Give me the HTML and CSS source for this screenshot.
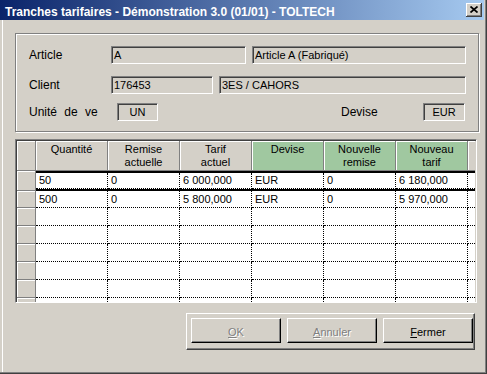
FILE: index.html
```html
<!DOCTYPE html>
<html lang="fr">
<head>
<meta charset="utf-8">
<title>Tranches tarifaires</title>
<link rel="stylesheet" href="styles.css">
</head>
<body>
<div class="win">
  <div class="titlebar">
    <span class="title">Tranches tarifaires - Démonstration 3.0 (01/01) - TOLTECH</span>
    <span class="close"><svg width="8" height="7" viewBox="0 0 8 7"><path d="M0.5 0.5 L7.5 6.5 M7.5 0.5 L0.5 6.5" stroke="#000" stroke-width="1.7" fill="none"/></svg></span>
  </div>
  <div class="body">
    <div class="group">
      <div class="frow r1">
        <span class="lbl">Article</span>
        <span class="fld w-art">A</span>
        <span class="fld w-art2">Article A (Fabriqué)</span>
      </div>
      <div class="frow r2">
        <span class="lbl">Client</span>
        <span class="fld w-cli">176453</span>
        <span class="fld w-cli2">3ES / CAHORS</span>
      </div>
      <div class="frow r3">
        <span class="lbl lbl-unit">Unité de ve</span>
        <span class="fld fc w-un">UN</span>
        <span class="lbl lbl-dev">Devise</span>
        <span class="fld fc w-eur">EUR</span>
      </div>
    </div>

    <div class="grid">
      <div class="grow hrow">
        <div class="rh"></div>
        <div class="cells">
          <div class="hc">Quantité</div>
          <div class="hc">Remise<br>actuelle</div>
          <div class="hc">Tarif<br>actuel</div>
          <div class="hc green">Devise</div>
          <div class="hc green">Nouvelle<br>remise</div>
          <div class="hc green">Nouveau<br>tarif</div>
          <div class="hc fill"></div>
        </div>
      </div>
      <div class="grow cur">
        <div class="rh"></div>
        <div class="cells">
          <div class="c">50</div><div class="c">0</div><div class="c">6 000,000</div><div class="c">EUR</div><div class="c">0</div><div class="c">6 180,000</div><div class="c fill"></div>
        </div>
      </div>
      <div class="grow r-2">
        <div class="rh"></div>
        <div class="cells">
          <div class="c">500</div><div class="c">0</div><div class="c">5 800,000</div><div class="c">EUR</div><div class="c">0</div><div class="c">5 970,000</div><div class="c fill"></div>
        </div>
      </div>
      <div class="grow">
        <div class="rh"></div>
        <div class="cells"><div class="c"></div><div class="c"></div><div class="c"></div><div class="c"></div><div class="c"></div><div class="c"></div><div class="c fill"></div></div>
      </div>
      <div class="grow">
        <div class="rh"></div>
        <div class="cells"><div class="c"></div><div class="c"></div><div class="c"></div><div class="c"></div><div class="c"></div><div class="c"></div><div class="c fill"></div></div>
      </div>
      <div class="grow">
        <div class="rh"></div>
        <div class="cells"><div class="c"></div><div class="c"></div><div class="c"></div><div class="c"></div><div class="c"></div><div class="c"></div><div class="c fill"></div></div>
      </div>
      <div class="grow">
        <div class="rh"></div>
        <div class="cells"><div class="c"></div><div class="c"></div><div class="c"></div><div class="c"></div><div class="c"></div><div class="c"></div><div class="c fill"></div></div>
      </div>
      <div class="grow">
        <div class="rh"></div>
        <div class="cells"><div class="c"></div><div class="c"></div><div class="c"></div><div class="c"></div><div class="c"></div><div class="c"></div><div class="c fill"></div></div>
      </div>
      <div class="grow">
        <div class="rh"></div>
        <div class="cells"><div class="c"></div><div class="c"></div><div class="c"></div><div class="c"></div><div class="c"></div><div class="c"></div><div class="c fill"></div></div>
      </div>
    </div>

    <div class="panel">
      <button class="btn" disabled><u>O</u>K</button>
      <button class="btn" disabled><u>A</u>nnuler</button>
      <button class="btn"><u>F</u>ermer</button>
    </div>
  </div>
</div>
</body>
</html>
```

FILE: styles.css
```css
html, body {
  margin: 0;
  padding: 0;
  background: #d4d0c8;
}
body {
  font-family: "Liberation Sans", Arial, sans-serif;
  color: #000;
}
.win {
  width: 487px;
  height: 374px;
  box-sizing: border-box;
  padding-right: 3px;
  background: #d4d0c8;
  box-shadow: inset -1px -1px 0 #404040, inset -2px -2px 0 #808080, inset 2px 0 0 #d4d0c8, inset 3px 0 0 #fff;
  overflow: hidden;
}
.titlebar {
  height: 20px;
  display: flex;
  align-items: flex-start;
  background: linear-gradient(to right, #0a246a, #a6caf0);
}
.title {
  padding: 5px 0 0 5px;
  font-weight: bold;
  font-size: 12px;
  line-height: 14px;
  color: #fff;
  white-space: nowrap;
}
.close {
  margin: 3px 2px 0 auto;
  width: 16px;
  height: 14px;
  box-sizing: border-box;
  background: #d4d0c8;
  box-shadow: inset -1px -1px 0 #404040, inset 1px 1px 0 #fff, inset -2px -2px 0 #808080;
  display: flex;
  align-items: center;
  justify-content: center;
}
.close svg { display: block; margin-top: -1px; }

.body {
  padding: 13px 0 0 15px;
}
.group {
  width: 464px;
  height: 99px;
  box-sizing: border-box;
  border: 1px solid #808080;
  box-shadow: 1px 1px 0 #fff, inset 1px 1px 0 #fff;
  padding: 12px 0 0 13px;
}
.frow {
  display: flex;
  align-items: center;
  height: 18px;
}
.r2 { margin-top: 12px; }
.r3 { margin-top: 9px; }
.lbl {
  width: 82px;
  font-size: 12px;
  white-space: nowrap;
}
.lbl-unit { width: 88px; word-spacing: 4px; }
.lbl-dev { width: 82px; margin-left: 183px; }
.fld {
  height: 18px;
  box-sizing: border-box;
  border-top: 1px solid #808080;
  border-left: 1px solid #808080;
  border-bottom: 1px solid #fff;
  border-right: 1px solid #fff;
  box-shadow: inset 1px 1px 0 #404040;
  padding-left: 2px;
  font-size: 11px;
  line-height: 16px;
  white-space: nowrap;
  overflow: hidden;
}
.fc { padding-left: 0; text-align: center; }
.w-art { width: 135px; }
.w-art2 { width: 214px; margin-left: 6px; }
.w-cli { width: 102px; }
.w-cli2 { width: 247px; margin-left: 6px; }
.w-un { width: 41px; }
.w-eur { width: 42px; }

.grid {
  margin-top: 7px;
  width: 462px;
  height: 164px;
  box-sizing: border-box;
  border-top: 1px solid #808080;
  border-left: 1px solid #808080;
  border-bottom: 1px solid #fff;
  border-right: 1px solid #fff;
  box-shadow: inset 1px 1px 0 #404040, inset -1px -1px 0 #d4d0c8;
  padding: 1px;
  overflow: hidden;
  background: #fff;
}
.grow {
  display: flex;
  height: 18px;
}
.rh {
  width: 19px;
  flex: none;
  box-sizing: border-box;
  background: #d4d0c8;
  border-right: 1px solid #808080;
  border-bottom: 1px solid #808080;
  box-shadow: inset 1px 1px 0 #fff;
}
.cells {
  flex: 1;
  display: flex;
  box-sizing: border-box;
}
.c {
  width: 72px;
  flex: none;
  box-sizing: border-box;
  border-right: 1px dotted #000;
  border-bottom: 1px dotted #000;
  background: #fff;
  padding-left: 3px;
  font-size: 11px;
  line-height: 17px;
  white-space: nowrap;
}
.c.fill { flex: 1; width: auto; border-right: 0; }

.hrow { height: 30px; }
.hc {
  width: 72px;
  flex: none;
  box-sizing: border-box;
  background: #d4d0c8;
  border-right: 1px solid #808080;
  border-bottom: 1px solid #808080;
  box-shadow: inset 1px 1px 0 #fff;
  text-align: center;
  font-size: 11px;
  line-height: 13px;
  padding-top: 2px;
}
.hc.green { background: #a0c8a0; }
.hc.fill { flex: 1; width: auto; border-right: 0; }

.cur { height: 20px; }
.cur .cells {
  border-top: 2px solid #000;
  border-bottom: 2px solid #000;
}
.cur .c { line-height: 15px; }
.r-2 { height: 17px; }
.r-2 .c { line-height: 16px; }

.panel {
  margin: 10px 0 0 171px;
  width: 289px;
  height: 37px;
  box-sizing: border-box;
  border-top: 1px solid #fff;
  border-left: 1px solid #fff;
  border-bottom: 1px solid #404040;
  border-right: 1px solid #404040;
  box-shadow: inset -1px -1px 0 #808080;
  padding: 4px 0 0 4px;
  display: flex;
  gap: 6px;
}
.btn {
  width: 90px;
  height: 25px;
  margin: 0;
  box-sizing: border-box;
  background: #d4d0c8;
  border-top: 1px solid #fff;
  border-left: 1px solid #fff;
  border-bottom: 1px solid #000;
  border-right: 1px solid #000;
  border-radius: 0;
  box-shadow: inset -1px -1px 0 #808080;
  font-family: "Liberation Sans", Arial, sans-serif;
  font-size: 11px;
  line-height: 13px;
  padding: 3px 0 0 0;
  color: #000;
  text-align: center;
}
.btn:disabled {
  color: #808080;
  text-shadow: 1px 1px 0 #fff;
}
```
